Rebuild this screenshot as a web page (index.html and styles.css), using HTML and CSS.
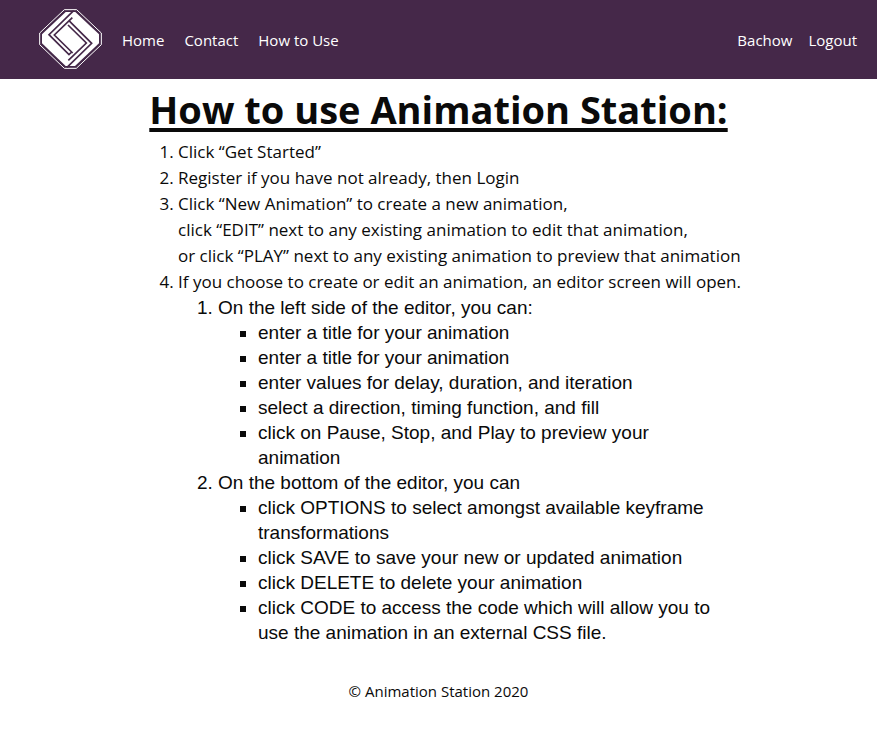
FILE: index.html
```html
<!DOCTYPE html>
<html lang="en">
<head>
<meta charset="utf-8">
<meta name="viewport" content="width=device-width, initial-scale=1">
<title>How to Use - Animation Station</title>
<link rel="stylesheet" href="styles.css">
</head>
<body>
<header class="navbar">
  <a class="brand" href="#" aria-label="Animation Station">
    <svg class="logo" viewBox="3 3 192 183" aria-hidden="true">
      <path class="logo-frame" d="M82 8H119L193 78V113L118 184H82L8 113V78Z"/>
      <path class="logo-fill" d="M86 15H115L186 82V109L114 177H86L15 109V82Z"/>
      <path class="logo-line" d="M110 11L36 83L96 143L104 135M90 181L164 109L104 49L96 41M106 32L52 84L107 138M94 160L148 108L93 54"/>
    </svg>
  </a>
  <nav class="links">
    <a href="#">Home</a>
    <a href="#">Contact</a>
    <a href="#">How to Use</a>
  </nav>
  <nav class="links account" aria-label="Account">
    <a href="#">Bachow</a>
    <a href="#">Logout</a>
  </nav>
</header>
<main class="content">
  <h1>How to use Animation Station:</h1>
  <ol class="steps">
    <li>Click “Get Started”</li>
    <li>Register if you have not already, then Login</li>
    <li>Click “New Animation” to create a new animation,<br>click “EDIT” next to any existing animation to edit that animation,<br>or click “PLAY” next to any existing animation to preview that animation</li>
    <li>If you choose to create or edit an animation, an editor screen will open.
      <ol class="details">
        <li>On the left side of the editor, you can:
          <ul>
            <li>enter a title for your animation</li>
            <li>enter a title for your animation</li>
            <li>enter values for delay, duration, and iteration</li>
            <li>select a direction, timing function, and fill</li>
            <li>click on Pause, Stop, and Play to preview your animation</li>
          </ul>
        </li>
        <li>On the bottom of the editor, you can
          <ul>
            <li>click OPTIONS to select amongst available keyframe transformations</li>
            <li>click SAVE to save your new or updated animation</li>
            <li>click DELETE to delete your animation</li>
            <li>click CODE to access the code which will allow you to use the animation in an external CSS file.</li>
          </ul>
        </li>
      </ol>
    </li>
  </ol>
</main>
<footer class="footer">© Animation Station 2020</footer>
</body>
</html>
```
FILE: styles.css
```css
* {
  box-sizing: border-box;
}

body {
  margin: 0;
  background: #fff;
  color: #0a0a0a;
  font-family: "Segoe UI", "Open Sans", "Noto Sans", sans-serif;
}

.navbar {
  display: flex;
  align-items: center;
  padding: 8px 20px 8px 38px;
  background: #452849;
}

.brand {
  height: 63px;
  margin-right: 20px;
}

.logo {
  display: block;
  width: 64px;
  height: 61px;
}

.logo-frame {
  fill: none;
  stroke: #fff;
  stroke-width: 3;
}

.logo-fill {
  fill: #fff;
}

.logo-line {
  fill: none;
  stroke: #452849;
  stroke-width: 5;
}

.links {
  display: flex;
  gap: 20px;
  font-size: 15px;
  line-height: 24px;
}

.links a {
  color: #fff;
  text-decoration: none;
}

.account {
  gap: 16px;
  margin-left: auto;
}

h1 {
  margin: 2px 0;
  font-size: 38px;
  line-height: 56px;
  font-weight: 700;
  text-align: center;
  text-decoration: underline;
  text-decoration-thickness: 4px;
  text-underline-offset: 4px;
  text-decoration-skip-ink: none;
}

ol,
ul {
  margin: 0;
  padding-left: 40px;
}

.steps {
  width: fit-content;
  margin: 0 auto;
  padding-left: 42px;
  font-size: 17px;
  line-height: 26px;
}

.details {
  max-width: 554px;
  font-family: "Liberation Sans", Arial, sans-serif;
  font-size: 19px;
  line-height: 25px;
}

.details ul {
  list-style: square;
}

.footer {
  margin-top: 34px;
  font-size: 15px;
  line-height: 24px;
  text-align: center;
}
```
